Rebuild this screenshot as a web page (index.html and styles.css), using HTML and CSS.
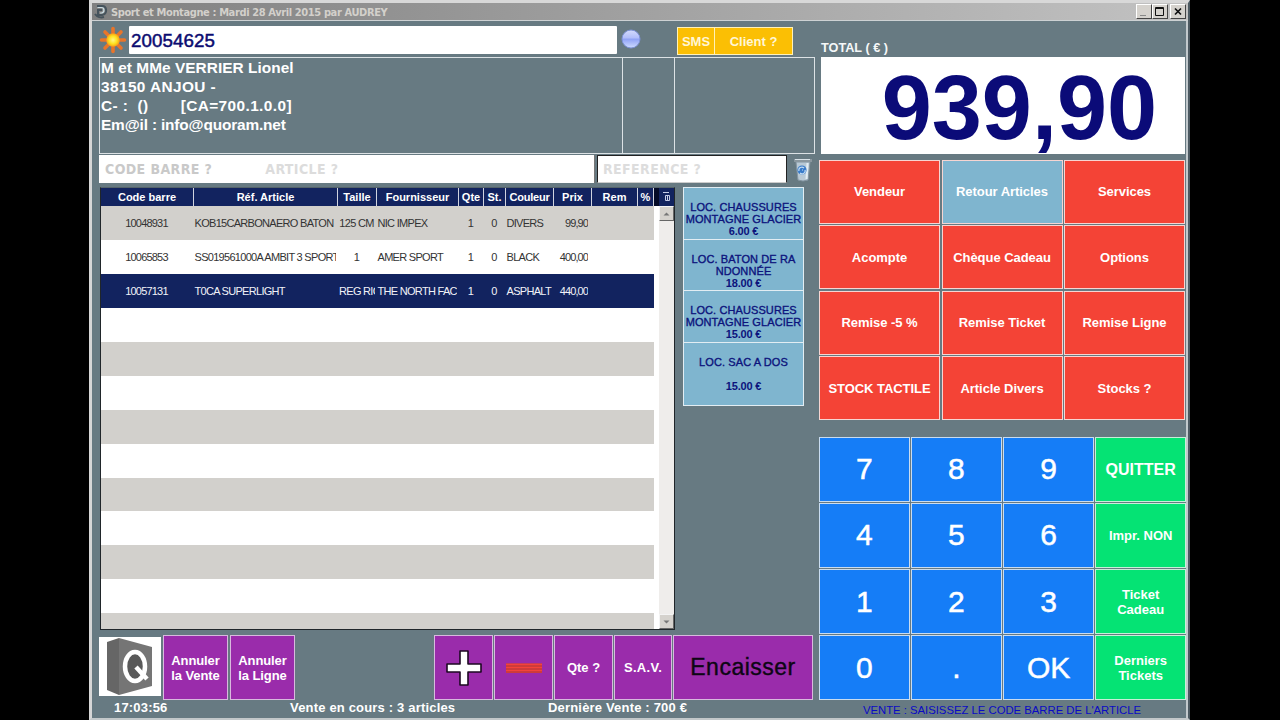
FILE: index.html
```html
<!DOCTYPE html>
<html lang="fr">
<head>
<meta charset="utf-8">
<title>Sport et Montagne</title>
<link rel="stylesheet" href="styles.css">
</head>
<body>
<div class="window">
  <header class="titlebar">
    <svg class="app-icon" width="14" height="14" viewBox="0 0 14 14"><path d="M3 1h5c5 0 6 8 0 9H4V5h4M1 9c2 3 6 4 9 3" fill="none" stroke="#46535c" stroke-width="2"/><path d="M3.500 2.500h4c3 0 3.500 5 0 5.500H6" fill="none" stroke="#c9dbe2" stroke-width="1.200"/></svg>
    <span class="title">Sport et Montagne : Mardi 28 Avril 2015 par AUDREY</span>
    <div class="controls">
      <button class="ctl"><svg width="14" height="13"><path d="M3 10.500h6" stroke="#888"/></svg></button>
      <button class="ctl"><svg width="14" height="13"><path d="M2.500 2.500h8v8h-8zM2 3.500h9" fill="none" stroke="#111"/></svg></button>
      <button class="ctl close"><svg width="14" height="13"><path d="M4 3.500l6 6M10 3.500l-6 6" stroke="#111" stroke-width="1.700"/></svg></button>
    </div>
  </header>
  <div class="body">
    <main class="left">
      <div class="client-row">
        <svg class="sun" width="28" height="28" viewBox="-14 -14 28 28"><defs><radialGradient id="sg"><stop offset="0" stop-color="#fff68a"/><stop offset=".6" stop-color="#ffe11c"/><stop offset="1" stop-color="#f59a1d"/></radialGradient></defs><path d="M0-11.500V11.500M-11.500 0H11.500M-8-8L8 8M8-8L-8 8" stroke="#e9752a" stroke-width="3.600" stroke-linecap="round"/><circle r="6.800" fill="url(#sg)"/></svg>
        <div class="client-input">20054625</div>
        <svg class="orb" width="20" height="20" viewBox="0 0 20 20"><defs><linearGradient id="og" x2="0" y2="1"><stop offset="0" stop-color="#d4dbfc"/><stop offset=".45" stop-color="#b1bdfb"/><stop offset=".5" stop-color="#8fa1f6"/><stop offset="1" stop-color="#cfdcff"/></linearGradient></defs><circle cx="10" cy="10" r="9" fill="url(#og)" stroke="#7e92d8"/></svg>
        <div class="yellow"><button class="sms">SMS</button><button>Client ?</button></div>
      </div>
      <section class="info">
        <div class="info-text">M et MMe VERRIER Lionel<br><span class="l2">38150 ANJOU -</span><br><span class="l3">C- :&nbsp; ()<span class="ca">[CA=700.1.0.0]</span></span><br><span class="l4">Em@il : info@quoram.net</span></div>
        <div></div><div></div>
      </section>
      <div class="search-row">
        <div class="search"><span>CODE BARRE ?</span><span class="article">ARTICLE ?</span></div>
        <div class="search ref">REFERENCE ?</div>
        <svg class="trash" width="20" height="25" viewBox="0 0 20 25"><path d="M3 5l2 18q5 2 10 0l2-18z" fill="#b9c9d5" stroke="#8495a1"/><path d="M1 2h18v3H1z" fill="#8a979f"/><path d="M2 2.500h15" stroke="#d9e2e7"/><path d="M14.500 6l-1 16" stroke="#e3edf3" stroke-width="2"/><circle cx="9" cy="13" r="4.600" fill="#397bc9"/><path d="M6 14a3 3 0 0 1 5-3M12 13a3 3 0 0 1-5 3M9 13h1" fill="none" stroke="#c3dcf3" stroke-width="1.200"/></svg>
      </div>
      <div class="middle">
        <div class="table">
          <div class="grid-area">
            <div class="cols thead"><span>Code barre</span><span>Réf. Article</span><span>Taille</span><span>Fournisseur</span><span>Qte</span><span>St.</span><span>Couleur</span><span>Prix</span><span>Rem</span><span>%</span></div>
            <div class="cols row"><span>10048931</span><span>KOB15CARBONAERO BATON</span><span>125 CM</span><span>NIC IMPEX</span><span>1</span><span>0</span><span>DIVERS</span><span>99,90</span><span></span><span></span></div>
            <div class="cols row"><span>10065853</span><span>SS019561000A AMBIT 3 SPORT</span><span>1</span><span>AMER SPORT</span><span>1</span><span>0</span><span>BLACK</span><span>400,00</span><span></span><span></span></div>
            <div class="cols row selected"><span>10057131</span><span>T0CA SUPERLIGHT</span><span class="clip">REG RIG</span><span>THE NORTH FAC</span><span>1</span><span>0</span><span>ASPHALT</span><span>440,00</span><span></span><span></span></div>
            <div class="empty"></div>
          </div>
          <div class="scroll">
            <div class="scroll-head"><svg width="15" height="18"><path d="M4 4.500h6M6.500 7.500h4v5h-4zM8.500 7v6" fill="none" stroke="#c5cbe6"/></svg></div>
            <button class="arrow"><svg width="13" height="12"><path d="M3.500 7.500h6l-3-3z" fill="#777"/></svg></button>
            <div class="track"></div>
            <button class="arrow"><svg width="13" height="12"><path d="M3.500 4.500h6l-3 3z" fill="#777"/></svg></button>
          </div>
        </div>
        <div class="locs">
          <button><span>LOC. CHAUSSURES<br>MONTAGNE GLACIER<br><b>6.00 €</b></span></button>
          <button><span>LOC. BATON DE RA<br>NDONNÉE<br><b>18.00 €</b></span></button>
          <button><span>LOC. CHAUSSURES<br>MONTAGNE GLACIER<br><b>15.00 €</b></span></button>
          <button><span>LOC. SAC A DOS<br><br><b>15.00 €</b></span></button>
        </div>
      </div>
      <div class="actions">
        <svg class="logo" width="62" height="59" viewBox="0 0 62 59"><path fill="#fff" d="M0 0h62v59H0z"/><path d="M8 5l12-4v57L8 53z" fill="#666"/><path d="M20 1l33 9v39l-33 9z" fill="#757575"/><ellipse cx="36" cy="29.500" rx="10" ry="14.500" fill="#595959" stroke="#fff" stroke-width="4.500"/><path d="M37 30l11 12" stroke="#fff" stroke-width="4.500"/></svg>
        <button class="b1">Annuler<br>la Vente</button>
        <button class="b2">Annuler<br>la Ligne</button>
        <button class="b3"><svg width="38" height="38" viewBox="0 0 38 38"><path d="M15 2h8v13h13v8H23v13h-8V23H2v-8h13z" fill="#fff" stroke="#1d0822" stroke-width="1.600" stroke-linejoin="round"/></svg></button>
        <button class="b4"><svg width="38" height="12" viewBox="0 0 38 12"><path d="M1 1h36v10H1z" fill="#f4433a"/><path d="M1 4h36M1 7h36M1 10h36" stroke="#96303d" stroke-width=".8"/><path d="M1 1.500h36" stroke="#c53b5a"/></svg></button>
        <button class="b5">Qte ?</button>
        <button class="b6">S.A.V.</button>
        <button class="b7">Encaisser</button>
      </div>
      <footer class="status"><span>17:03:56</span><span>Vente en cours : 3 articles</span><span>Dernière Vente : 700 €</span></footer>
    </main>
    <aside class="right">
      <div class="total-label">TOTAL ( € )</div>
      <div class="total">939,90</div>
      <div class="functions">
        <button>Vendeur</button><button class="blue">Retour Articles</button><button>Services</button>
        <button>Acompte</button><button>Chèque Cadeau</button><button>Options</button>
        <button>Remise -5 %</button><button>Remise Ticket</button><button>Remise Ligne</button>
        <button>STOCK TACTILE</button><button>Article Divers</button><button>Stocks ?</button>
      </div>
      <div class="keypad">
        <button>7</button><button>8</button><button>9</button><button class="green quit">QUITTER</button>
        <button>4</button><button>5</button><button>6</button><button class="green">Impr. NON</button>
        <button>1</button><button>2</button><button>3</button><button class="green">Ticket<br>Cadeau</button>
        <button>0</button><button>.</button><button>OK</button><button class="green">Derniers<br>Tickets</button>
      </div>
      <div class="message">VENTE : SAISISSEZ LE CODE BARRE DE L'ARTICLE</div>
    </aside>
  </div>
</div>
</body>
</html>
```
FILE: styles.css
```css
* { box-sizing: border-box; }
body { margin: 0; background: #000; height: 720px; overflow: hidden; font-family: "Liberation Sans", Arial, sans-serif; }
button { font: inherit; color: inherit; margin: 0; padding: 0; border: 1px solid #dfe3e6; background: none; display: flex; align-items: center; justify-content: center; text-align: center; white-space: nowrap; min-width: 0; }
svg { display: block; flex: none; }
.window { width: 1101px; height: 720px; margin-left: 89px; background: #677a82; border: solid; border-width: 3px 2px 2px 3px; border-color: #d8d8d8 #4c5961 #c3c8ca #d6d6d6; }
.titlebar { height: 18px; display: flex; align-items: center; padding: 0 2px; background: linear-gradient(90deg, #808080, #c2c2c2); border-bottom: 1px solid #cdd1d3; }
.app-icon { margin: 0 3px 0 0; }
.title { font: bold 11px "DejaVu Sans Condensed", "DejaVu Sans", sans-serif; font-stretch: condensed; letter-spacing: -.38px; color: #d3d0cb; white-space: nowrap; padding-top: 1px; }
.controls { display: flex; margin-left: auto; }
.ctl { width: 16px; height: 15px; background: #d5d2cd; border: 1px solid; border-color: #fff #444 #444 #fff; }
.close { margin-left: 2px; }

.body { display: grid; grid-template-columns: 727px 1fr; height: 697px; border-right: 2px solid #c2c9cd; }
.left { padding-left: 7px; min-width: 0; }

.client-row { height: 36px; display: flex; align-items: flex-start; padding-top: 5px; }
.sun { margin-right: 2px; }
.client-input { width: 488px; height: 28px; background: #fff; border-radius: 1px; color: #0b0b70; font-size: 18.700px; line-height: 29px; padding-left: 2px; letter-spacing: .1px; -webkit-text-stroke: .5px; }
.orb { margin: 3px 0 0 4px; }
.yellow { display: flex; width: 116px; height: 28px; margin: 1px 0 0 36px; color: #fff6d6; font-weight: bold; font-size: 13px; }
.yellow button { flex: 1; background: #fbbf04; border-color: #fff1b8; }
.yellow .sms { flex: none; width: 37px; border-right: 0; }

.info { width: 716px; height: 97px; border: 1px solid #dce2e5; display: grid; grid-template-columns: 522px 52px 1fr; color: #fff; }
.info > div + div { border-left: 1px solid #dce2e5; }
.info-text { font-weight: bold; font-size: 15.400px; line-height: 19px; padding: 0 0 0 1px; white-space: nowrap; letter-spacing: .05px; }
.l2 { letter-spacing: .4px; }
.l3 { letter-spacing: .4px; }
.ca { margin-left: 32px; }
.l4 { letter-spacing: -.15px; }

.search-row { display: flex; padding-top: 1px; height: 33px; }
.search { width: 496px; height: 28px; background: #fff; padding-left: 6px; font: bold 14px/29px "DejaVu Sans Condensed", "DejaVu Sans", sans-serif; font-stretch: condensed; letter-spacing: .4px; color: #c9c9c9; display: flex; border-right: 1px solid #777; }
.article { margin-left: 53px; color: #dcdcdc; }
.ref { width: 190px; margin-left: 2px; padding-left: 5px; border: 1px solid #222; border-bottom-color: #ccc; color: #ddd; line-height: 27px; }
.trash { margin: 2px 0 0 6px; }

.middle { display: grid; grid-template-columns: 576px 121px; column-gap: 8px; height: 443px; align-items: start; }
.table { margin: 0 0 0 1px; height: 443px; border: 1px solid #20262a; border-top-color: #56646b; background: #fff; display: flex; }
.grid-area { width: 558px; display: flex; flex-direction: column; }
.cols { display: grid; grid-template-columns: 93px 144px 39px 82px 25px 22px 48px 38px 46px 16px; }
.thead { height: 18px; flex: none; background: #12235f; border-right: 5px solid #050b28; color: #fff; font: bold 11px/18px "Liberation Sans", Arial, sans-serif; }
.thead span { text-align: center; border-right: 1px solid #d0d3df; white-space: nowrap; }
.thead span:nth-child(7) { letter-spacing: -.2px; }
.row { height: 34px; width: 553px; flex: none; font-size: 11px; line-height: 34px; color: #333; letter-spacing: -.7px; }
.row:nth-child(2) { background: #d2d0cc; }
.row span { overflow: hidden; white-space: nowrap; text-align: center; margin-right: 2px; }
.row span:nth-child(1) { letter-spacing: -.8px; }
.row span:nth-child(2), .row span:nth-child(4), .row span:nth-child(7) { text-align: left; padding-left: .5px; }
.row span:nth-child(8) { text-align: right; margin-right: 4px; letter-spacing: -.9px; }
.row span.clip { text-align: left; padding-left: 1px; }
.row.selected { background: #12235f; color: #f1f2f8; }
.empty { flex: 1; width: 553px; background: repeating-linear-gradient(#fff 0 33.900px, #d2d0cc 33.900px 67.800px); }
.scroll { width: 15px; display: flex; flex-direction: column; }
.scroll-head { height: 18px; background: #12235f; }
.track { flex: 1; background: #efedeb; }
.arrow { height: 15px; background: #d5d2cd; border: 1px solid; border-color: #f4f4f4 #666 #666 #f4f4f4; }

.locs { display: grid; grid-template-rows: 51.500px 51.500px 51.500px 64px; color: #0c137c; font-size: 11px; line-height: 12px; }
.locs button { align-items: flex-start; background: #7fb5cf; border-color: #e2edf3; border-bottom-width: 0; padding-top: 13px; letter-spacing: .1px; -webkit-text-stroke: .35px; }
.locs b { letter-spacing: -.2px; -webkit-text-stroke: 0; }
.locs button:last-child { border-bottom-width: 1px; }

.actions { display: grid; grid-template-columns: 62px 2px 65px 2px 65px 139px 59px 1px 59px 1px 59px 1px 58px 1px 140px; height: 65px; margin-top: 5px; color: #fff; font-weight: bold; font-size: 13px; line-height: 15px; }
.actions button { background: #9a2cab; border-color: #d8b9de; height: 65px; }
.logo { margin-top: 2px; grid-column: 1; }
.b1 { grid-column: 3; }
.b2 { grid-column: 5; }
.b3 { grid-column: 7; }
.b4 { grid-column: 9; }
.b5 { grid-column: 11; }
.b6 { grid-column: 13; }
.b7 { grid-column: 15; }
.actions .b1, .actions .b2 { letter-spacing: -.1px; }
.actions .b6 { letter-spacing: .3px; }
.actions .b7 { color: #0d0614; font-weight: normal; font-size: 23px; letter-spacing: .5px; -webkit-text-stroke: .4px; }

.status { display: grid; grid-template-columns: 176px 258px 1fr; padding: 0 0 0 15px; color: #fff; font-weight: bold; font-size: 13px; line-height: 16px; letter-spacing: .18px; white-space: nowrap; }

.right { padding-right: 1px; min-width: 0; }
.total-label { height: 36px; padding: 18px 0 0 2px; color: #f5f8f9; font-weight: bold; font-size: 12.700px; line-height: 18px; }
.total { width: 364px; height: 97px; margin-left: 2px; background: #fff; color: #0b0b78; font-weight: bold; font-size: 90px; line-height: 103px; text-align: right; padding-right: 28px; overflow: hidden; }
.functions { display: grid; grid-template-columns: repeat(3, 1fr); grid-template-rows: repeat(4, 1fr); gap: 1.500px; width: 366px; height: 260px; margin-top: 6px; color: #fff; font-weight: bold; font-size: 13px; }
.functions button { background: #f44336; border-color: #f6d5d2; letter-spacing: -.05px; }
.functions .blue { background: #7fb5cf; }
.keypad { display: grid; grid-template-columns: repeat(4, 1fr); grid-template-rows: repeat(4, 1fr); gap: 1.500px; width: 367px; height: 263px; margin-top: 17px; color: #fff; font-size: 30px; }
.keypad button { background: #157df7; border-color: #c9dcf0; -webkit-text-stroke: .5px; }
.keypad .green { background: #05e374; border-color: #c8efd9; font-weight: bold; font-size: 13px; line-height: 15px; -webkit-text-stroke: 0; }
.keypad .quit { font-size: 16px; }
.message { color: #0a0ac4; text-align: center; font-size: 11.300px; line-height: 18px; padding-top: 1px; white-space: nowrap; }
```
